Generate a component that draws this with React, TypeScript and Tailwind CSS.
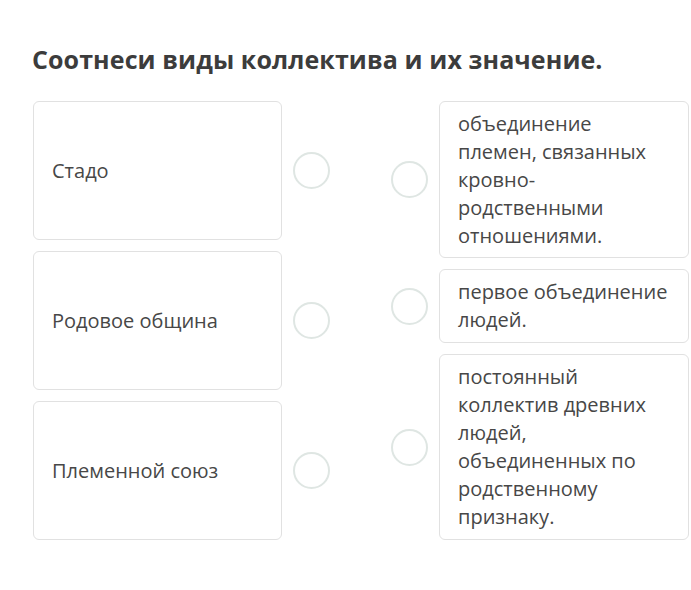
import React from "react";

const left = ["Стадо", "Родовое община", "Племенной союз"];

const right = [
  {
    lines: ["объединение", "племен, связанных", "кровно-", "родственными", "отношениями."],
    h: "h-[157px]",
  },
  { lines: ["первое объединение", "людей."], h: "h-[74px]" },
  {
    lines: [
      "постоянный",
      "коллектив древних",
      "людей,",
      "объединенных по",
      "родственному",
      "признаку.",
    ],
    h: "h-[186px]",
  },
];

const Circle = () => (
  <div className="w-[37px] h-[37px] rounded-full border-2 border-[#dfe6e3] bg-white shrink-0" />
);

export default function App() {
  return (
    <div
      className="w-[691px] h-[590px] bg-white text-[#474747] overflow-hidden"
      style={{ fontFamily: '"Open Sans", sans-serif' }}
    >
      {/* Question */}
      <h1 className="pt-[41px] pl-[32px] text-[25px] font-bold text-[#3c3c3c] leading-[36px] tracking-[0.1px]">
        Соотнеси виды коллектива и их значение.
      </h1>

      {/* Matching */}
      <div className="flex mt-[24px] pl-[33px]">
        <div className="flex flex-col gap-[11px]">
          {left.map((item) => (
            <div key={item} className="flex items-center gap-[11px]">
              <div className="w-[249px] h-[139px] flex items-center px-[18px] border border-[#e1e1e1] rounded-[6px] text-[20px]">
                {item}
              </div>
              <Circle />
            </div>
          ))}
        </div>

        <div className="flex flex-col gap-[11px] ml-[61px]">
          {right.map((item) => (
            <div key={item.lines[0]} className="flex items-center gap-[11px]">
              <Circle />
              <div
                className={`w-[250px] ${item.h} flex flex-col justify-center pl-[18px] pr-[10px] border border-[#e1e1e1] rounded-[6px] text-[20px] leading-[28px] whitespace-nowrap`}
              >
                {item.lines.map((l) => (
                  <span key={l}>{l}</span>
                ))}
              </div>
            </div>
          ))}
        </div>
      </div>
    </div>
  );
}
